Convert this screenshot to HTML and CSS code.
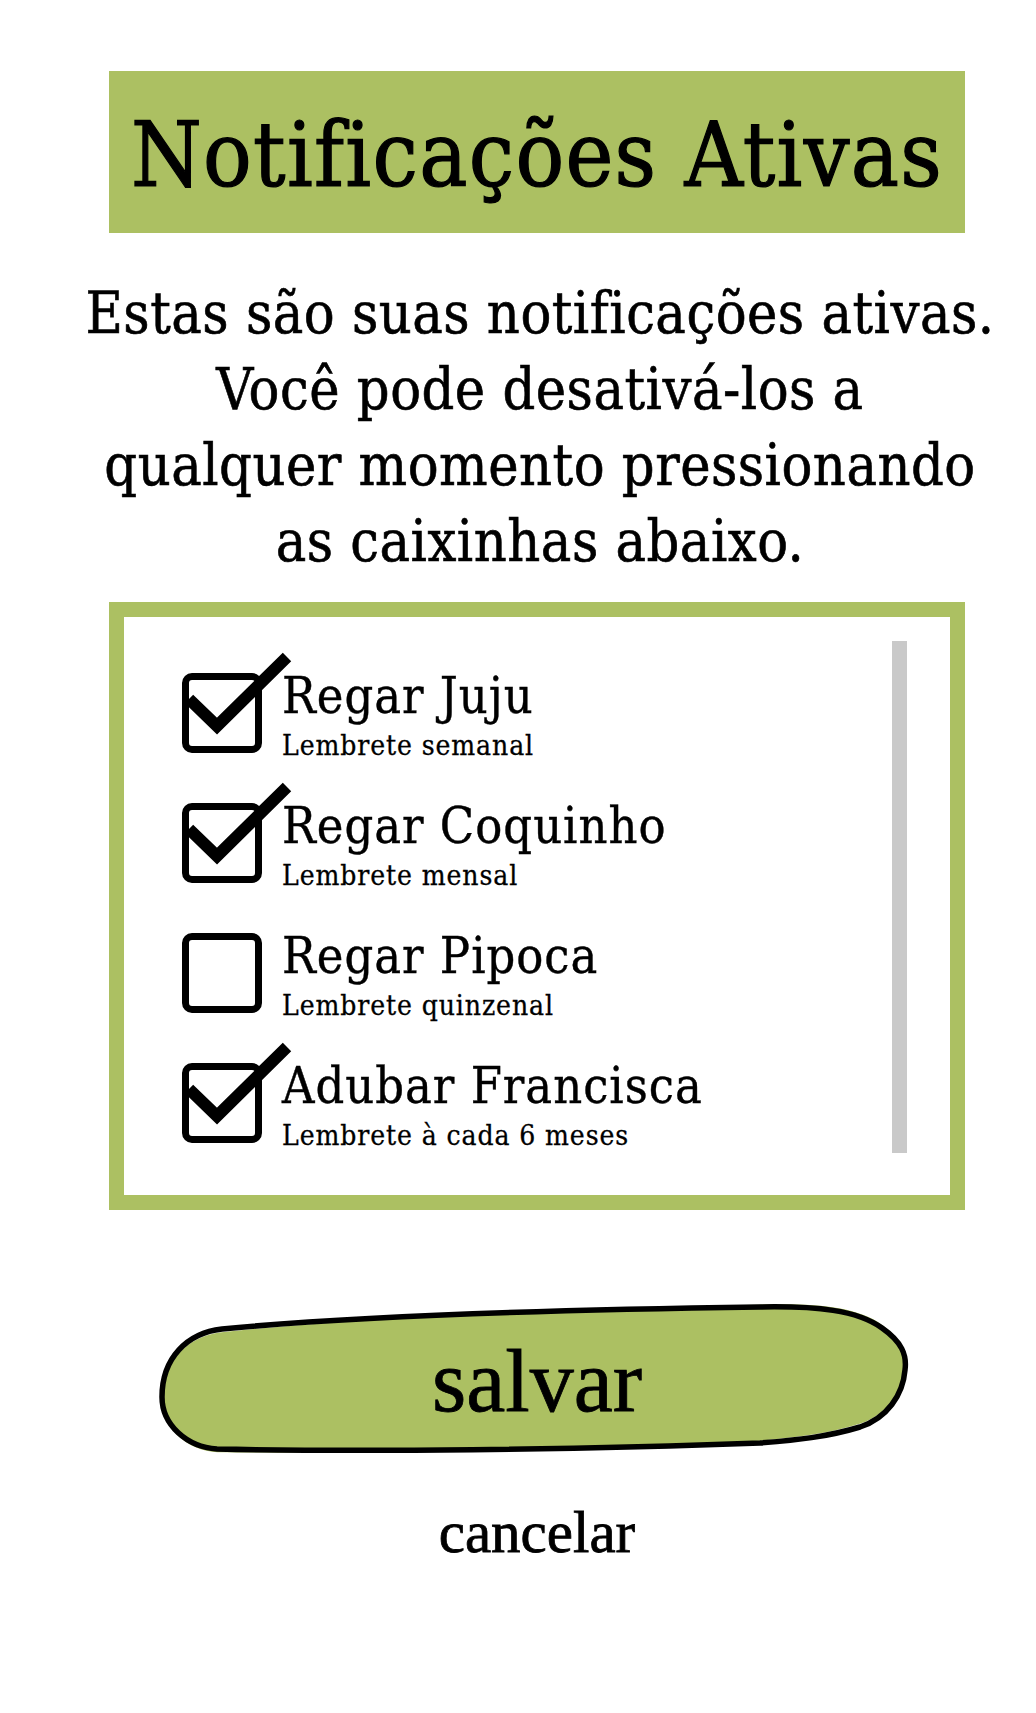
FILE: index.html
```html
<!DOCTYPE html>
<html lang="pt-BR">
<head>
<meta charset="utf-8">
<title>Notificações Ativas</title>
<link rel="stylesheet" href="styles.css">
</head>
<body>
<main class="page">
  <header class="banner">
    <h1 class="banner-title">Notificações Ativas</h1>
  </header>

  <p class="intro">Estas são suas notificações ativas.<br>Você pode desativá-los a<br>qualquer momento pressionando<br>as caixinhas abaixo.</p>

  <section class="list-box">
    <ul class="items">
      <li class="item">
        <span class="checkbox">
          <svg class="check" viewBox="0 -30 120 120" aria-hidden="true"><polyline points="7,26 35,53 105,-16"/></svg>
        </span>
        <div class="item-text">
          <div class="item-title">Regar Juju</div>
          <div class="item-sub">Lembrete semanal</div>
        </div>
      </li>
      <li class="item">
        <span class="checkbox">
          <svg class="check" viewBox="0 -30 120 120" aria-hidden="true"><polyline points="7,26 35,53 105,-16"/></svg>
        </span>
        <div class="item-text">
          <div class="item-title">Regar Coquinho</div>
          <div class="item-sub">Lembrete mensal</div>
        </div>
      </li>
      <li class="item">
        <span class="checkbox"></span>
        <div class="item-text">
          <div class="item-title">Regar Pipoca</div>
          <div class="item-sub">Lembrete quinzenal</div>
        </div>
      </li>
      <li class="item">
        <span class="checkbox">
          <svg class="check" viewBox="0 -30 120 120" aria-hidden="true"><polyline points="7,26 35,53 105,-16"/></svg>
        </span>
        <div class="item-text">
          <div class="item-title">Adubar Francisca</div>
          <div class="item-sub">Lembrete à cada 6 meses</div>
        </div>
      </li>
    </ul>
    <div class="scrollbar"></div>
  </section>

  <div class="actions">
    <button class="save" type="button">
      <svg class="save-shape" viewBox="0 0 760 160" aria-hidden="true">
        <path class="save-fill" transform="rotate(-0.6 380 80)" d="M 65,29 C 220,14 450,9 603,7 C 660,6 700,10 725,28 C 745,42 750,55 748,70 C 746,95 730,118 703,127 C 670,137 640,140 603,143 C 420,150 200,152 60,149 C 30,147 5,125 5,97 C 5,58 30,33 65,29 Z"/>
        <path class="save-line" d="M 65,29 C 220,14 450,9 603,7 C 660,6 700,10 725,28 C 745,42 750,55 748,70 C 746,95 730,118 703,127 C 670,137 640,140 603,143 C 420,150 200,152 60,149 C 30,147 5,125 5,97 C 5,58 30,33 65,29 Z"/>
      </svg>
      <span class="save-label">salvar</span>
    </button>
    <button class="cancel" type="button">cancelar</button>
  </div>
</main>
</body>
</html>
```
FILE: styles.css
```css
html, body {
  margin: 0;
  padding: 0;
  background: #ffffff;
}

body {
  min-height: 1713px;
  color: #000;
  font-family: "DejaVu Serif Condensed", "DejaVu Serif", serif;
  font-stretch: condensed;
}

.page {
  width: 856px;
  margin: 0 0 0 109px;
  padding-top: 71px;
  display: flex;
  flex-direction: column;
}

/* Banner */
.banner {
  background: #acc062;
  height: 162px;
  box-sizing: border-box;
  padding-top: 39px;
}

.banner-title {
  margin: 0;
  font-weight: normal;
  font-size: 90px;
  line-height: 90px;
  letter-spacing: 1.3px;
  text-align: center;
  white-space: nowrap;
  -webkit-text-stroke: 1.2px #000;
}

/* Intro paragraph */
.intro {
  margin: 42px -43px 23px -37px;
  font-size: 57px;
  line-height: 76px;
  letter-spacing: 0.5px;
  text-align: center;
  white-space: nowrap;
  -webkit-text-stroke: 0.6px #000;
}

/* List box */
.list-box {
  display: flex;
  border: 15px solid #acc062;
  background: #fff;
}

.items {
  list-style: none;
  margin: 0;
  padding: 56px 0 42px 58px;
  flex: 1;
  display: flex;
  flex-direction: column;
  gap: 40px;
}

.item {
  display: flex;
  gap: 20px;
  height: 90px;
}

.checkbox {
  position: relative;
  flex: none;
  width: 80px;
  height: 80px;
  box-sizing: border-box;
  border: 7px solid #000;
  border-radius: 10px;
}

.check {
  position: absolute;
  left: -7px;
  top: -37px;
  width: 120px;
  height: 120px;
  overflow: visible;
}

.check polyline {
  fill: none;
  stroke: #000;
  stroke-width: 12;
  stroke-linejoin: miter;
  stroke-linecap: butt;
}

.item-text {
  display: flex;
  flex-direction: column;
}

.item-title {
  font-size: 50px;
  line-height: 46px;
  letter-spacing: 1px;
  white-space: nowrap;
  -webkit-text-stroke: 0.4px #000;
}

.item-sub {
  margin-top: 10px;
  font-size: 28px;
  line-height: 34px;
  letter-spacing: 0.9px;
  white-space: nowrap;
  -webkit-text-stroke: 0.3px #000;
}

.scrollbar {
  flex: none;
  width: 15px;
  margin: 24px 43px 42px 0;
  background: #c9c9c9;
}

/* Actions */
.actions {
  display: flex;
  flex-direction: column;
  align-items: center;
  margin-top: 90px;
}

.save {
  position: relative;
  width: 760px;
  height: 160px;
  margin: 0;
  padding: 38px 0 0;
  box-sizing: border-box;
  border: none;
  background: transparent;
  font-family: "Liberation Serif", "Times New Roman", serif;
  font-size: 88px;
  line-height: 88px;
  color: #000;
  display: flex;
  justify-content: center;
  align-items: flex-start;
  cursor: pointer;
}

.save-shape {
  position: absolute;
  left: 0;
  top: 0;
  width: 760px;
  height: 160px;
}

.save-fill {
  fill: #acc062;
}

.save-line {
  fill: none;
  stroke: #000;
  stroke-width: 5.5;
  stroke-linejoin: round;
}

.save-label {
  position: relative;
  -webkit-text-stroke: 0.8px #000;
}

.cancel {
  margin-top: 43px;
  padding: 0;
  border: none;
  background: transparent;
  font-family: "Liberation Serif", "Times New Roman", serif;
  font-size: 59px;
  line-height: 59px;
  color: #000;
  cursor: pointer;
  -webkit-text-stroke: 0.8px #000;
}
```
